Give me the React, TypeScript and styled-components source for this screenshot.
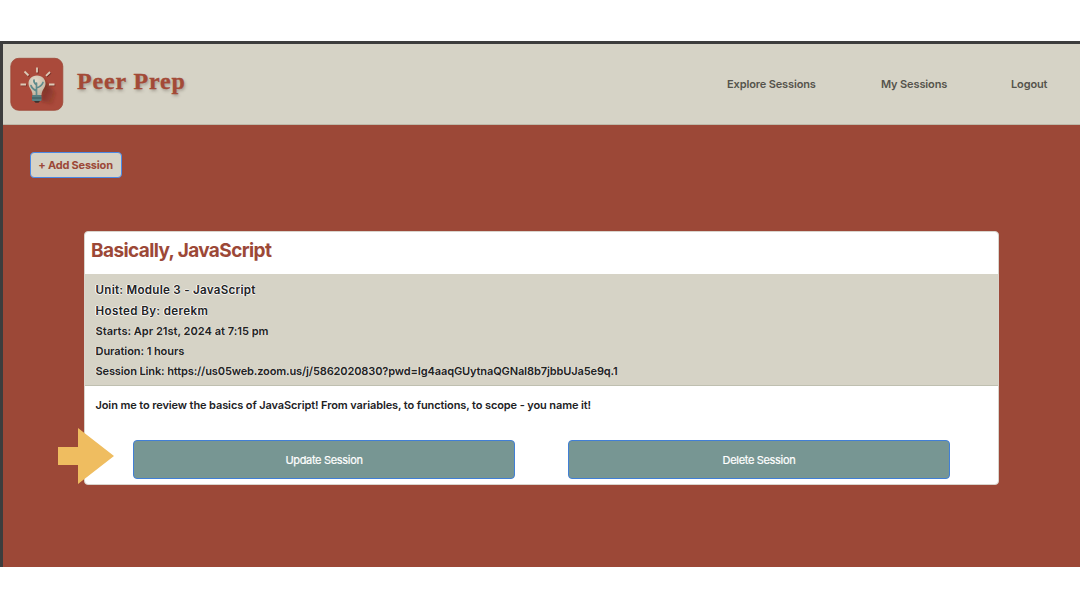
import React from 'react';
import styled, { createGlobalStyle } from 'styled-components';

const GlobalStyle = createGlobalStyle`
  * { box-sizing: border-box; }
  body { margin: 0; background: #fff; font-family: Inter, "Liberation Sans", sans-serif; }
`;

const Page = styled.div`
  height: 608px;
  padding: 41px 0;
  background: #fff;
  overflow: hidden;
`;

const Frame = styled.div`
  height: 526px;
  border-top: 3px solid #3d3d3d;
  border-left: 3px solid #3d3d3d;
  background: #9c4837;
`;

const Header = styled.header`
  height: 81px;
  display: flex;
  align-items: center;
  padding: 0 32px 0 7px;
  background: #d6d3c6;
  border-bottom: 1px solid #bdb8a8;
`;

const Logo = styled.svg`
  width: 54px;
  height: 54px;
  flex: none;
`;

const Brand = styled.h1`
  margin: 0 auto 7px 13px;
  font: 700 24px/30px "Liberation Serif", serif;
  letter-spacing: 0.85px;
  color: #a34a37;
  -webkit-text-stroke: 0.3px #a34a37;
  text-shadow: 1px 2px 3px rgba(80, 70, 60, 0.4);
`;

const Nav = styled.nav`
  display: flex;
  gap: 65px;
`;

const NavLink = styled.a<{ $width: number }>`
  width: ${(p) => p.$width}px;
  font-size: 11px;
  line-height: 16px;
  font-weight: 600;
  letter-spacing: -0.13px;
  white-space: nowrap;
  color: #55534c;
`;

const Main = styled.main`
  padding: 27px 81px 0 81px;
`;

const AddButton = styled.button`
  display: block;
  width: 92px;
  height: 26px;
  margin-left: -54px;
  padding: 0 1px 0 0;
  border: 1px solid #4a8ae6;
  border-radius: 4px;
  background: #d6d3c6;
  color: #9c4837;
  font: 700 11px/24px Inter, sans-serif;
  letter-spacing: -0.2px;
  white-space: nowrap;
`;

const Card = styled.section`
  position: relative;
  height: 254px;
  margin-top: 53px;
  border-radius: 4px;
  border: 1px solid #d9d4cc;
  background: #fff;
`;

const CardTitle = styled.h2`
  height: 42px;
  margin: 0;
  padding: 0 6px;
  font-size: 19px;
  line-height: 37px;
  font-weight: 700;
  letter-spacing: -0.6px;
  color: #9c4837;
`;

const Details = styled.div`
  height: 112px;
  padding: 6px 10.5px 0;
  background: #d6d3c6;
  border-bottom: 1px solid #bfbfb0;
`;

const Line = styled.p<{ $height?: number; $light?: boolean; $spacing?: number }>`
  margin: 0;
  font-size: ${(p) => (p.$light ? 11.5 : 11)}px;
  line-height: ${(p) => p.$height ?? 20}px;
  font-weight: 600;
  letter-spacing: ${(p) => p.$spacing ?? 0}px;
  white-space: nowrap;
  color: #22221f;
  text-shadow: ${(p) =>
    p.$light
      ? '-1px 0 0 #fff, 0 1px 0 rgba(255, 255, 255, 0.8), 0 -1px 0 rgba(255, 255, 255, 0.5)'
      : '-1px 0 0 rgba(255, 255, 255, 0.6)'};
`;

const Description = styled.div`
  height: 54px;
  padding: 9px 10.5px 0;
`;

const Actions = styled.div`
  display: flex;
  gap: 53px;
  padding-left: 48px;
`;

const ActionButton = styled.button`
  width: 382px;
  height: 39px;
  padding: 1px 0 0;
  border: 1px solid #417fd6;
  border-radius: 4px;
  background: #779693;
  color: #fff;
  font: 400 11px/36px Inter, sans-serif;
  letter-spacing: -0.32px;
  -webkit-text-stroke: 0.2px #fff;
`;

const Arrow = styled.svg`
  position: absolute;
  left: -27px;
  top: 195px;
  width: 56px;
  height: 57px;
`;

function BulbLogo() {
  return (
    <Logo viewBox="0 0 54 54">
      <defs>
        <linearGradient id="shade" x1="0" y1="0" x2="1" y2="1">
          <stop offset="0" stopColor="#5a1f17" stopOpacity="0.75" />
          <stop offset="1" stopColor="#5a1f17" stopOpacity="0" />
        </linearGradient>
        <radialGradient id="glass" cx="0.4" cy="0.3" r="0.7">
          <stop offset="0" stopColor="#e4dccb" />
          <stop offset="1" stopColor="#c3b5a2" />
        </radialGradient>
        <filter id="soft" x="-30%" y="-30%" width="160%" height="160%">
          <feGaussianBlur stdDeviation="1.6" />
        </filter>
      </defs>
      <rect x="0.8" y="1.3" width="52" height="52" rx="8" fill="#aa4a3b" stroke="#9c4636" strokeWidth="0.8" />
      <path d="M33 22 L46 36 L43 48 L31 44 Z" fill="url(#shade)" filter="url(#soft)" />
      <g stroke="#7a3026" strokeWidth="1.8" transform="translate(0.8 0.9)">
        <path d="M27 10.500v5M14.500 14.500l4 4M40 15l-4 3.800M10.500 27.500h5.500M39 27.500h5.500" />
      </g>
      <g stroke="#dccab7" strokeWidth="1.8">
        <path d="M27 10.500v5M14.500 14.500l4 4M40 15l-4 3.800M10.500 27.500h5.500M39 27.500h5.500" />
      </g>
      <path d="M27 18.500C21.500 18.500 18.500 22.500 18.500 26.500C18.500 31 22.500 33 22.500 38H31.500C31.500 33 35.500 31 35.500 26.500C35.500 22.500 32.500 18.500 27 18.500Z" fill="url(#glass)" />
      <g fill="none" stroke="#5f8b8c" strokeWidth="1.7" strokeLinecap="round">
        <path d="M26.500 38V26M26.500 34C23.500 32.500 21.500 30.500 21 28.500M26.500 31C30 30 32 28 33 25.500M26.500 28C24.500 26.500 23.500 25 24 23" />
      </g>
      <rect x="22" y="38" width="9.500" height="6" rx="1" fill="#587f82" />
      <path d="M22 41h9.500" stroke="#34494b" strokeWidth="0.8" />
      <path d="M24 44h6l-1.500 1.800h-3z" fill="#3c3330" />
    </Logo>
  );
}

export default function App() {
  return (
    <Page>
      <GlobalStyle />
      <Frame>
        <Header>
          <BulbLogo />
          <Brand>Peer Prep</Brand>
          <Nav>
            <NavLink $width={89}>Explore Sessions</NavLink>
            <NavLink $width={65}>My Sessions</NavLink>
            <NavLink $width={37}>Logout</NavLink>
          </Nav>
        </Header>
        <Main>
          <AddButton>+ Add Session</AddButton>
          <Card>
            <CardTitle>Basically, JavaScript</CardTitle>
            <Details>
              <Line $height={21} $light $spacing={0.32}>Unit: Module 3 - JavaScript</Line>
              <Line $height={21} $light $spacing={0.42}>Hosted By: derekm</Line>
              <Line $height={19.5} $spacing={0.03}>Starts: Apr 21st, 2024 at 7:15 pm</Line>
              <Line $height={19.5} $spacing={-0.06}>Duration: 1 hours</Line>
              <Line $height={20} $spacing={-0.11}>Session Link: https://us05web.zoom.us/j/5862020830?pwd=Ig4aaqGUytnaQGNaI8b7jbbUJa5e9q.1</Line>
            </Details>
            <Description>
              <Line $spacing={-0.105}>Join me to review the basics of JavaScript! From variables, to functions, to scope - you name it!</Line>
            </Description>
            <Actions>
              <ActionButton>Update Session</ActionButton>
              <ActionButton>Delete Session</ActionButton>
            </Actions>
            <Arrow viewBox="0 0 56 57">
              <path d="M0 20H20V1L56 29L20 57V38H0Z" fill="#efbd60" />
            </Arrow>
          </Card>
        </Main>
      </Frame>
    </Page>
  );
}
